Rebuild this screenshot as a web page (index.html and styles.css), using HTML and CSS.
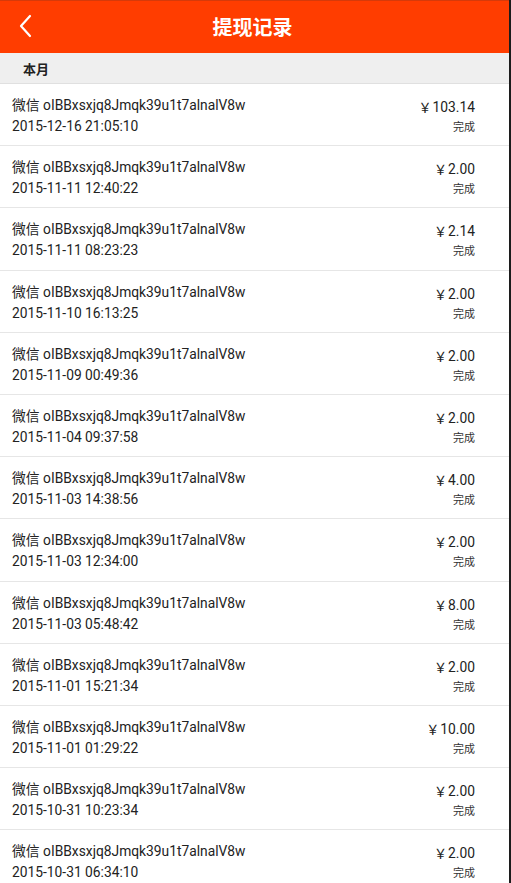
FILE: index.html
```html
<!DOCTYPE html>
<html lang="zh">
<head>
<meta charset="utf-8">
<title>提现记录</title>
<link rel="stylesheet" href="styles.css">
</head>
<body>
<div class="app">
  <header class="topbar">
    <span class="back">
      <svg width="14" height="24" viewBox="0 0 14 24"><path d="M12 2 L3 12 L12 22" fill="none" stroke="#fff" stroke-width="2.2" stroke-linecap="round" stroke-linejoin="round"/></svg>
    </span>
    <h1 class="title">提现记录</h1>
  </header>
  <div class="section">本月</div>
  <ul class="list">
    <li class="row"><div class="info"><div class="name">微信 oIBBxsxjq8Jmqk39u1t7alnalV8w</div><div class="time">2015-12-16 21:05:10</div></div><div class="meta"><div class="amount"><span class="yen">￥</span>103.14</div><div class="status">完成</div></div></li>
    <li class="row"><div class="info"><div class="name">微信 oIBBxsxjq8Jmqk39u1t7alnalV8w</div><div class="time">2015-11-11 12:40:22</div></div><div class="meta"><div class="amount"><span class="yen">￥</span>2.00</div><div class="status">完成</div></div></li>
    <li class="row"><div class="info"><div class="name">微信 oIBBxsxjq8Jmqk39u1t7alnalV8w</div><div class="time">2015-11-11 08:23:23</div></div><div class="meta"><div class="amount"><span class="yen">￥</span>2.14</div><div class="status">完成</div></div></li>
    <li class="row"><div class="info"><div class="name">微信 oIBBxsxjq8Jmqk39u1t7alnalV8w</div><div class="time">2015-11-10 16:13:25</div></div><div class="meta"><div class="amount"><span class="yen">￥</span>2.00</div><div class="status">完成</div></div></li>
    <li class="row"><div class="info"><div class="name">微信 oIBBxsxjq8Jmqk39u1t7alnalV8w</div><div class="time">2015-11-09 00:49:36</div></div><div class="meta"><div class="amount"><span class="yen">￥</span>2.00</div><div class="status">完成</div></div></li>
    <li class="row"><div class="info"><div class="name">微信 oIBBxsxjq8Jmqk39u1t7alnalV8w</div><div class="time">2015-11-04 09:37:58</div></div><div class="meta"><div class="amount"><span class="yen">￥</span>2.00</div><div class="status">完成</div></div></li>
    <li class="row"><div class="info"><div class="name">微信 oIBBxsxjq8Jmqk39u1t7alnalV8w</div><div class="time">2015-11-03 14:38:56</div></div><div class="meta"><div class="amount"><span class="yen">￥</span>4.00</div><div class="status">完成</div></div></li>
    <li class="row"><div class="info"><div class="name">微信 oIBBxsxjq8Jmqk39u1t7alnalV8w</div><div class="time">2015-11-03 12:34:00</div></div><div class="meta"><div class="amount"><span class="yen">￥</span>2.00</div><div class="status">完成</div></div></li>
    <li class="row"><div class="info"><div class="name">微信 oIBBxsxjq8Jmqk39u1t7alnalV8w</div><div class="time">2015-11-03 05:48:42</div></div><div class="meta"><div class="amount"><span class="yen">￥</span>8.00</div><div class="status">完成</div></div></li>
    <li class="row"><div class="info"><div class="name">微信 oIBBxsxjq8Jmqk39u1t7alnalV8w</div><div class="time">2015-11-01 15:21:34</div></div><div class="meta"><div class="amount"><span class="yen">￥</span>2.00</div><div class="status">完成</div></div></li>
    <li class="row"><div class="info"><div class="name">微信 oIBBxsxjq8Jmqk39u1t7alnalV8w</div><div class="time">2015-11-01 01:29:22</div></div><div class="meta"><div class="amount"><span class="yen">￥</span>10.00</div><div class="status">完成</div></div></li>
    <li class="row"><div class="info"><div class="name">微信 oIBBxsxjq8Jmqk39u1t7alnalV8w</div><div class="time">2015-10-31 10:23:34</div></div><div class="meta"><div class="amount"><span class="yen">￥</span>2.00</div><div class="status">完成</div></div></li>
    <li class="row"><div class="info"><div class="name">微信 oIBBxsxjq8Jmqk39u1t7alnalV8w</div><div class="time">2015-10-31 06:34:10</div></div><div class="meta"><div class="amount"><span class="yen">￥</span>2.00</div><div class="status">完成</div></div></li>
  </ul>
</div>
</body>
</html>
```
FILE: styles.css
```css
html, body {
  margin: 0;
  padding: 0;
  background: #1c1c1c;
  height: 100%;
  overflow: hidden;
}
.app {
  width: 509px;
  height: 100%;
  background: #fff;
  font-family: Roboto, "Noto Sans CJK SC", sans-serif;
  color: #222;
}
.topbar {
  height: 53px;
  box-sizing: border-box;
  background: #ff3d00;
  border-top: 1px solid #d63a0a;
  display: flex;
  align-items: center;
  justify-content: center;
  position: relative;
}
.back {
  position: absolute;
  left: 18px;
  top: 13px;
  display: flex;
}
.title {
  margin: 0;
  color: #fff;
  font-size: 20px;
  font-weight: bold;
  font-family: "Noto Sans CJK SC", sans-serif;
  padding: 0 4px 1px 0;
}
.section {
  height: 31px;
  box-sizing: border-box;
  background: #efefef;
  border-bottom: 1px solid #e0e0e0;
  padding-left: 23px;
  display: flex;
  align-items: center;
  font-family: "Noto Sans CJK SC", sans-serif;
  font-size: 13px;
  font-weight: bold;
  color: #222;
}
.list {
  list-style: none;
  margin: 0;
  padding: 0;
}
.row {
  height: 62.2px;
  box-sizing: border-box;
  border-bottom: 1px solid #e6e6e6;
  display: flex;
  align-items: center;
  justify-content: space-between;
  padding: 2px 34px 0 12px;
}
.info {
  display: flex;
  flex-direction: column;
  gap: 3px;
}
.name, .time {
  font-size: 13.8px;
  line-height: 18px;
}
.meta {
  display: flex;
  flex-direction: column;
  align-items: flex-end;
  gap: 3px;
}
.amount {
  font-size: 13.8px;
  line-height: 18px;
}
.yen {
  font-family: "Noto Sans CJK SC", sans-serif;
  font-size: 13px;
  margin-right: 1px;
}
.status {
  font-family: "Noto Sans CJK SC", sans-serif;
  font-size: 11px;
  line-height: 14px;
  color: #333;
}
```
